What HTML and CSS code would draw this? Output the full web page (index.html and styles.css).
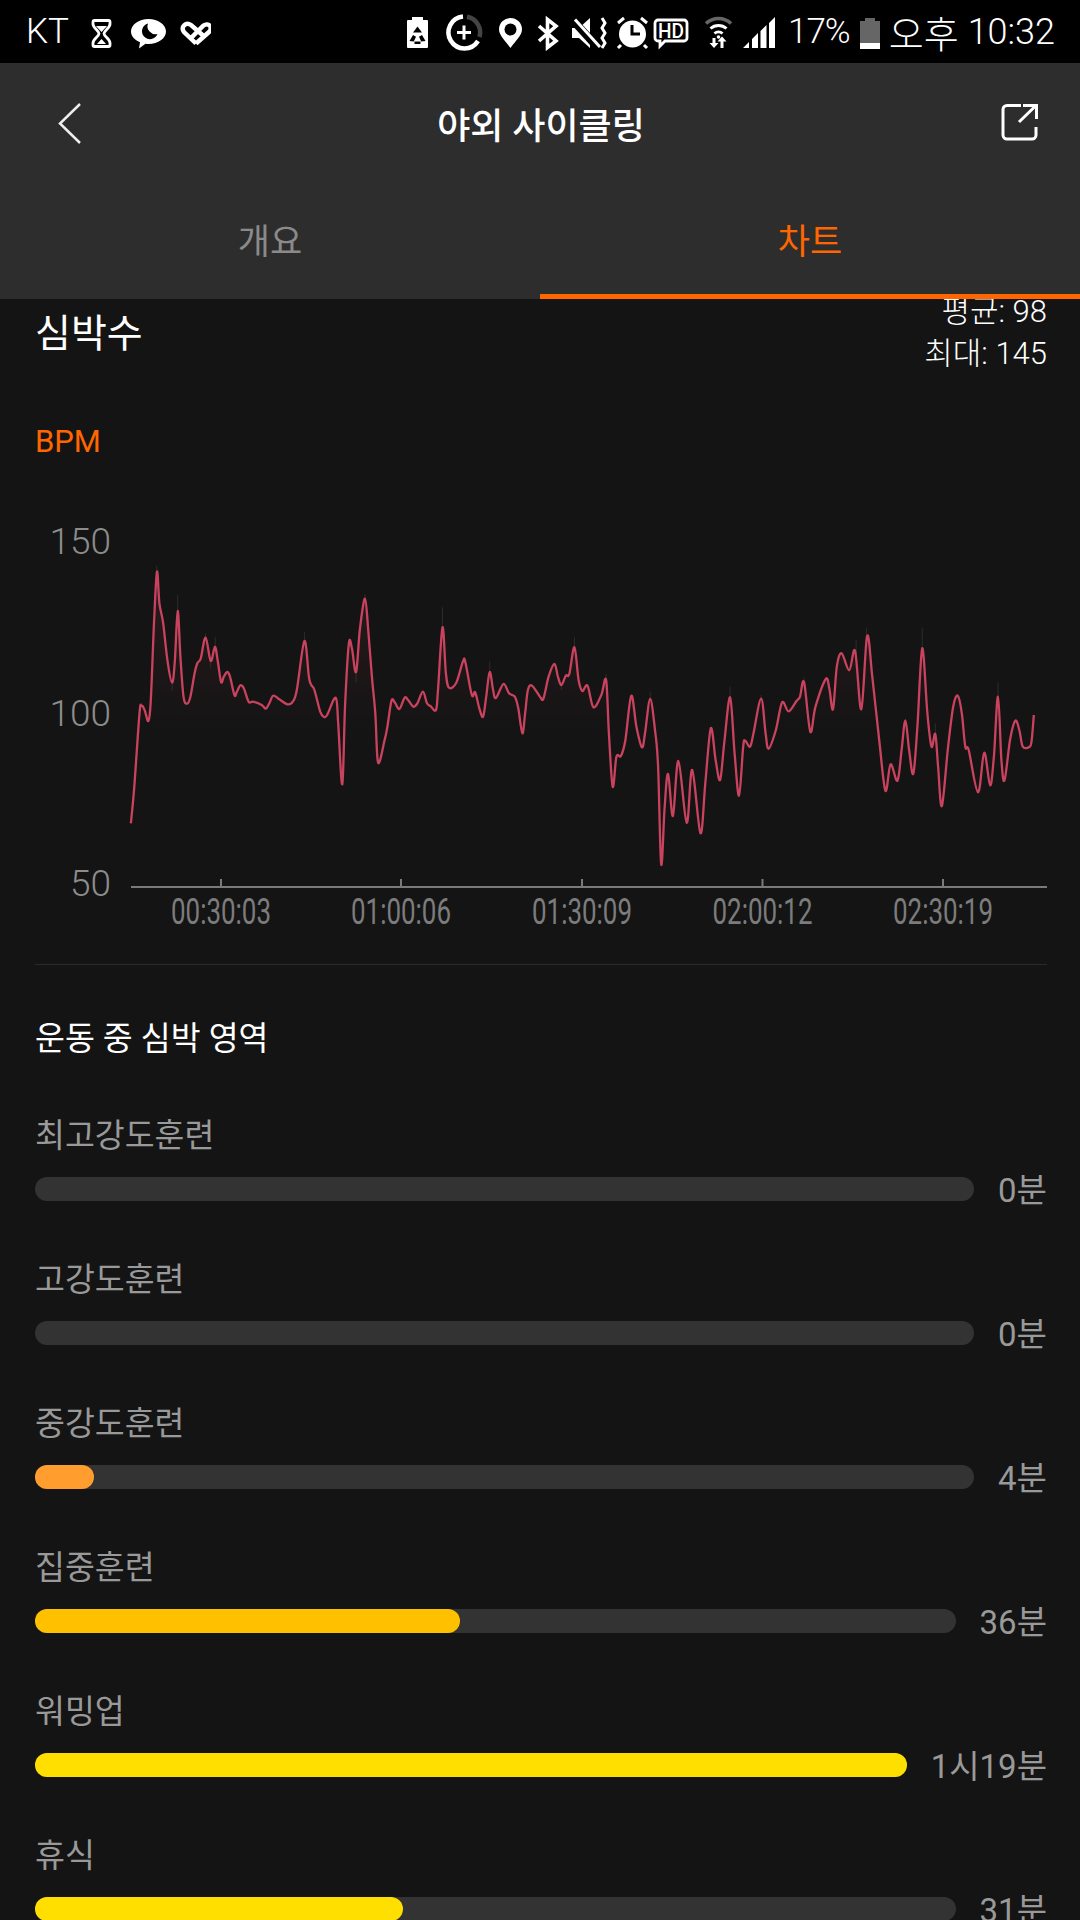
FILE: index.html
```html
<!DOCTYPE html>
<html lang="ko">
<head>
    <meta charset="UTF-8">
    <meta name="viewport" content="width=device-width, initial-scale=1.0">
    <title>야외 사이클링</title>
    <link rel="stylesheet" href="styles.css">
</head>
<body>
    <div class="status-bar">
        <span class="carrier">KT</span>
        <svg class="status-left" width="120" height="31" viewBox="91 18 120 31">
            <path class="line-2" d="M94.500 20.500h14a1.500 1.500 0 0 1 1.500 1.500v2c0 4-6 6.500-6 9.500s6 5.500 6 9.500v2a1.500 1.500 0 0 1-1.500 1.500h-14a1.500 1.500 0 0 1-1.500-1.500v-2c0-4 6-6.500 6-9.500s-6-5.500-6-9.500v-2a1.500 1.500 0 0 1 1.500-1.500z"/>
            <path class="solid" d="M96 26h11l-5.500 6zM101.500 39l-4.500 5h9z"/>
            <path class="solid" d="M148.500 19c9.700 0 17.500 5.600 17.500 12.500S158.200 44 148.500 44c-1 0-2 0-3-.2L139 48.500l1-6.300C134.500 40 131 36 131 31.500 131 24.600 138.800 19 148.500 19z"/>
            <path class="cut" d="M148 23.500a8 8 0 1 0 9.500 10.500a8 8 0 0 1-9.500-10.500z"/>
            <path class="line-4" d="M196 43.500L184 32c-4-5 2-10.500 7-7L202.500 35M191 38L203.500 25.500c5-3.500 10 2 5.500 6.500L196 43.500"/>
        </svg>
        <svg class="status-right" width="368" height="37" viewBox="407 14 368 37">
            <!-- battery saver -->
            <path class="solid" d="M412 17h11v3h4a1 1 0 0 1 1 1v26a1 1 0 0 1-1 1h-19a1 1 0 0 1-1-1V21a1 1 0 0 1 1-1h4z"/>
            <path class="cut" d="M417.500 26.500l4.500 6h-9zM409.500 41l3.500-6 3 1.800-2.200 4.700zM425.500 41l-3.500-6-3 1.800 2.200 4.700zM414.500 41.500h6v2.500h-6z"/>
            <!-- data ring -->
            <path class="line-4" d="M478 41A16 16 0 1 1 463 16.500"/>
            <path class="ring-off" d="M467 16.800A16 16 0 0 1 479.500 37"/>
            <path class="line-3" d="M457 32.500h14M464 25.500v14"/>
            <!-- location -->
            <path class="solid" d="M510.500 18a11.500 11.500 0 0 1 11.500 11.500c0 6-7 12-11.500 18.500c-4.500-6.500-11.500-12.500-11.500-18.500a11.500 11.500 0 0 1 11.500-11.500z"/>
            <circle class="cut" cx="510.500" cy="29.500" r="6"/>
            <!-- bluetooth -->
            <path class="line-bt" d="M539 26L556 41L547.500 47.500V19.500L556 26L539 41"/>
            <!-- vibrate -->
            <path class="solid" d="M572 28h7l11-10v30l-11-10h-7z"/>
            <path class="slash-cut" d="M570 17L600 50"/>
            <path class="line-3" d="M575 19.500L600 47"/>
            <path class="line-3" d="M602 18l3 5-3 5 3 5-3 5 3 5-3 5"/>
            <!-- alarm -->
            <circle class="solid" cx="632.500" cy="34" r="13.500"/>
            <path class="clock-hands" d="M632 25v9h8"/>
            <path class="line-3" d="M618 23l6-5M647 23l-6-5M621 45l-3 3M644 45l3 3"/>
            <!-- hd voice -->
            <path class="line-2" d="M658 20h26a3 3 0 0 1 3 3v15a3 3 0 0 1-3 3h-19l-5 5v-5h-2a3 3 0 0 1-3-3V23a3 3 0 0 1 3-3z"/>
            <text class="hd-text" x="671" y="37.500" text-anchor="middle" textLength="26" lengthAdjust="spacingAndGlyphs">HD</text>
            <!-- wifi -->
            <path class="wifi-off" d="M706 23.500A18 18 0 0 1 731 23.500"/>
            <path class="line-3" d="M710.500 28.500A12 12 0 0 1 726.500 28.500M714.500 33.500A6 6 0 0 1 722.500 33.500"/>
            <circle class="solid" cx="718.500" cy="37" r="1.800"/>
            <path class="solid" d="M712.500 38h3v5h3l-4.500 5-4.500-5h3zM722 36.500l4.500 5h-3v6.500h-3v-6.500h-3z"/>
            <!-- signal -->
            <path class="solid" d="M743 48l6-6v6zM752 48V39l6-6v15zM760.500 48V31l6-6v23zM769 48V23l6-6v31z"/>
        </svg>
        <span class="status-text percent">17%</span>
        <svg class="battery" width="20" height="31" viewBox="859 17 20 31">
            <path class="battery-empty" d="M864 17h10v3h5v22h-20V20h5z"/>
            <rect class="solid" x="859" y="42" width="20" height="6"/>
        </svg>
        <span class="status-text ampm">오후</span>
        <span class="status-text clock">10:32</span>
    </div>

    <header class="app-header">
        <div class="toolbar">
            <svg width="24" height="43" viewBox="58 102 24 43">
                <path class="line-back" d="M80 104L60 123.500L80 143"/>
            </svg>
            <h1 class="title">야외 사이클링</h1>
            <svg width="40" height="40" viewBox="1000 104 40 40">
                <path class="line-3" d="M1021 106.500H1007a4 4 0 0 0-4 4V136a4 4 0 0 0 4 4H1032a4 4 0 0 0 4-4V128M1019 123L1036 106.500M1023 106.500H1036.500V120"/>
            </svg>
        </div>
        <nav class="tabs">
            <div class="tab">개요</div>
            <div class="tab active">차트</div>
        </nav>
    </header>

    <main class="content">
        <div class="inset hr-head">
            <h2 class="hr-title">심박수</h2>
            <div class="hr-stats">
                <div>평균: 98</div>
                <div>최대: 145</div>
            </div>
        </div>
        <div class="inset bpm-unit">BPM</div>

        <svg class="chart" width="1080" height="470" viewBox="0 480 1080 470">
            <defs>
                <linearGradient id="areaTint" gradientUnits="userSpaceOnUse" x1="0" y1="560" x2="0" y2="730">
                    <stop offset="0" stop-color="#d0455f" stop-opacity="0.13"/>
                    <stop offset="1" stop-color="#d0455f" stop-opacity="0"/>
                </linearGradient>
            </defs>
            <text class="axis-y" x="111" y="554">150</text>
            <text class="axis-y" x="111" y="726">100</text>
            <text class="axis-y" x="111" y="896">50</text>
            <path id="hrSpikes" class="hr-spikes"/>
            <path id="hrArea" fill="url(#areaTint)"/>
            <path id="hrLine" class="hr-line"/>
            <path class="axis-line" d="M131 887H1047M221 879V887M401 879V887M582 879V887M762.500 879V887M943 879V887"/>
            <text class="axis-x" x="221" y="924" textLength="100" lengthAdjust="spacingAndGlyphs">00:30:03</text>
            <text class="axis-x" x="401" y="924" textLength="100" lengthAdjust="spacingAndGlyphs">01:00:06</text>
            <text class="axis-x" x="582" y="924" textLength="100" lengthAdjust="spacingAndGlyphs">01:30:09</text>
            <text class="axis-x" x="762.500" y="924" textLength="100" lengthAdjust="spacingAndGlyphs">02:00:12</text>
            <text class="axis-x" x="943" y="924" textLength="100" lengthAdjust="spacingAndGlyphs">02:30:19</text>
        </svg>

        <div class="inset divider"></div>
        <h3 class="inset zones-title">운동 중 심박 영역</h3>

        <div class="inset zone">
            <div class="zone-label">최고강도훈련</div>
            <div class="zone-row">
                <div class="track"></div>
                <span class="zone-value">0분</span>
            </div>
        </div>
        <div class="inset zone">
            <div class="zone-label">고강도훈련</div>
            <div class="zone-row">
                <div class="track"></div>
                <span class="zone-value">0분</span>
            </div>
        </div>
        <div class="inset zone">
            <div class="zone-label">중강도훈련</div>
            <div class="zone-row">
                <div class="track"><div class="fill fill-orange" style="width:6.3%"></div></div>
                <span class="zone-value">4분</span>
            </div>
        </div>
        <div class="inset zone">
            <div class="zone-label">집중훈련</div>
            <div class="zone-row">
                <div class="track"><div class="fill fill-amber" style="width:46.2%"></div></div>
                <span class="zone-value">36분</span>
            </div>
        </div>
        <div class="inset zone">
            <div class="zone-label">워밍업</div>
            <div class="zone-row">
                <div class="track"><div class="fill fill-yellow" style="width:100%"></div></div>
                <span class="zone-value">1시19분</span>
            </div>
        </div>
        <div class="inset zone">
            <div class="zone-label">휴식</div>
            <div class="zone-row">
                <div class="track"><div class="fill fill-yellow" style="width:40%"></div></div>
                <span class="zone-value">31분</span>
            </div>
        </div>
    </main>

    <script src="chart.js"></script>
</body>
</html>
```

FILE: styles.css
```css
* {
    box-sizing: border-box;
}
html, body {
    margin: 0;
    padding: 0;
    height: 1920px;
    overflow: hidden;
}
body {
    width: 1080px;
    display: flex;
    flex-direction: column;
    background: #141414;
    color: white;
    font-family: Roboto, 'Noto Sans CJK KR', sans-serif;
}
h1, h2, h3 {
    margin: 0;
    font-weight: 400;
}

/* status bar */
.status-bar {
    height: 63px;
    flex: none;
    display: flex;
    align-items: center;
    background: #000;
    padding-left: 26px;
}
.carrier {
    font-size: 35px;
    font-weight: 300;
    width: 65px;
}
.status-left {
    margin-top: 3px;
}
.status-right {
    margin-left: 196px;
    margin-top: 2px;
}
.status-text {
    font-size: 35px;
    font-weight: 300;
    letter-spacing: -1px;
    white-space: nowrap;
}
.percent {
    margin-left: 13px;
}
.battery {
    margin-left: 10px;
    margin-top: 3px;
}
.ampm {
    font-size: 38px;
    letter-spacing: 0;
    margin-left: 9px;
}
.clock {
    font-size: 36px;
    letter-spacing: 0;
    margin-left: 9px;
}

/* svg icon pieces */
.solid {
    fill: #fff;
}
.cut {
    fill: #000;
}
.line-2, .line-3, .line-4, .line-bt, .line-back, .ring-off, .wifi-off, .clock-hands, .slash-cut {
    fill: none;
    stroke: #fff;
}
.line-2 {
    stroke-width: 2.8;
}
.line-3 {
    stroke-width: 3;
}
.line-bt {
    stroke-width: 3.6;
}
.line-4 {
    stroke-width: 4.5;
}
.line-back {
    stroke: #eee;
    stroke-width: 2.5;
}
.ring-off {
    stroke: #444;
    stroke-width: 4.5;
}
.wifi-off {
    stroke: #666;
    stroke-width: 3.5;
}
.clock-hands {
    stroke: #000;
    stroke-width: 3;
}
.slash-cut {
    stroke: #000;
    stroke-width: 8;
}
.hd-text {
    fill: #fff;
    font-size: 20px;
    font-weight: 500;
}
.battery-empty {
    fill: #666;
}

/* header and tabs */
.app-header {
    height: 236px;
    flex: none;
    background: #2d2d2d;
}
.toolbar {
    height: 120px;
    display: flex;
    align-items: center;
    justify-content: space-between;
    padding: 0 40px 0 58px;
}
.title {
    font-size: 36px;
    font-weight: 500;
}
.tabs {
    height: 116px;
    display: flex;
}
.tab {
    flex: 1;
    display: flex;
    align-items: center;
    justify-content: center;
    font-size: 35px;
    color: #8a8a8a;
    border-bottom: 5px solid transparent;
}
.tab.active {
    color: #ff6600;
    border-bottom-color: #ff6600;
}

/* scrolled content, the first stats line runs under the header */
.content {
    flex: 1;
    overflow: hidden;
}
.inset {
    margin-left: 35px;
    margin-right: 33px;
}
.hr-head {
    display: flex;
    justify-content: space-between;
    align-items: center;
    margin-top: -8px;
}
.hr-title {
    font-size: 39px;
    padding-bottom: 7px;
}
.hr-stats {
    font-size: 31px;
    font-weight: 300;
    line-height: 42px;
    text-align: right;
    color: #fff;
}
.bpm-unit {
    font-size: 31px;
    line-height: 40px;
    margin-top: 47px;
    color: #ff6600;
}

/* chart */
.chart {
    display: block;
    margin-top: 18px;
}
.axis-y {
    font-size: 37px;
    font-weight: 300;
    fill: #8c8c8c;
    text-anchor: end;
}
.axis-x {
    font-size: 36px;
    font-weight: 400;
    fill: #7c7c7c;
    text-anchor: middle;
}
.axis-line {
    fill: none;
    stroke: #7a7a7a;
    stroke-width: 2;
}
.hr-line {
    fill: none;
    stroke: #c9435f;
    stroke-width: 2.3;
    stroke-linejoin: round;
}
.hr-spikes {
    fill: none;
    stroke: #2c2c2c;
    stroke-width: 1;
}

/* heart rate zones */
.divider {
    height: 1px;
    margin-top: 14px;
    background: #2a2a2a;
}
.zones-title {
    font-size: 32.5px;
    line-height: 44px;
    margin-top: 52px;
}
.zone {
    margin-top: 49px;
}
.zones-title + .zone {
    margin-top: 53px;
}
.zone-label {
    font-size: 32.5px;
    line-height: 44px;
    color: #999;
    margin-bottom: 11px;
}
.zone-row {
    height: 40px;
    display: flex;
    align-items: center;
    gap: 24px;
}
.zone-value {
    font-size: 33px;
    color: #999;
    white-space: nowrap;
    padding-bottom: 3px;
}
.track {
    flex: 1;
    height: 24px;
    border-radius: 12px;
    background: #333;
}
.fill {
    height: 100%;
    border-radius: 12px;
}
.fill-orange {
    background: #ff9d2e;
}
.fill-amber {
    background: #ffc000;
}
.fill-yellow {
    background: #ffdf00;
}
```

FILE: chart.js
```js
// heart rate trace, read off the chart at 2.904 units per px across and 3 per px down
const leftPart = [
    [380,970],[390,860],[405,640],[411,617],[420,630],[431,663],[438,600],[448,350],[456,215],[463,310],
    [474,370],[486,480],[500,548],[508,480],[516,333],[524,470],[533,590],[543,611],[553,590],[565,520],
    [573,490],[583,475],[597,413],[612,483],[624,440],[632,480],[642,546],[650,530],[660,516],[668,530],
    [681,586],[688,575],[698,556],[708,565],[722,605],[735,605],[760,615],[772,626],[782,610],[793,587],
    [810,597],[835,613],[850,605],[862,570],[884,423],[897,530],[904,555],[913,570],[930,635],[940,650],
    [950,645],[975,593],[982,670],[994,853],[1002,620],[1013,432],[1022,445],[1034,516],[1045,390],[1060,296],
    [1070,400],[1080,530],[1090,640],[1098,788],[1117,720],[1125,680],[1137,602],[1147,608],[1160,627],[1175,593],
    [1185,600],[1200,620],[1212,610],[1228,575],[1240,610],[1250,618],[1266,630],[1272,570],[1285,382],[1295,520],
    [1304,563],[1325,548],[1345,482],[1352,490],[1370,585],[1380,577],[1392,625],[1403,650],[1412,590],[1422,516],
    [1432,570],[1440,594],[1462,552],[1478,580],[1495,590],[1505,625],[1517,700],[1525,640],[1533,570],[1545,557]
];
const rightPart = [
    [0,590],[10,596],[25,530],[42,492],[52,530],[62,555],[75,527],[85,522],[100,442],[112,540],
    [123,573],[138,557],[155,622],[178,585],[192,540],[200,700],[211,860],[222,770],[235,768],[248,720],
    [265,587],[280,680],[296,742],[305,700],[320,597],[335,700],[343,800],[352,1093],[362,920],[372,822],
    [386,948],[402,783],[426,968],[442,810],[466,1000],[480,850],[496,685],[510,780],[523,840],[535,730],
    [552,592],[565,760],[578,887],[590,740],[596,722],[610,740],[620,700],[642,596],[655,700],[664,746],
    [685,690],[703,607],[722,634],[745,603],[755,590],[767,547],[785,695],[800,620],[830,537],[840,565],
    [851,628],[862,500],[876,460],[898,511],[915,453],[933,628],[950,408],[965,530],[985,720],[1003,872],
    [1018,793],[1038,842],[1050,750],[1061,661],[1072,750],[1084,821],[1096,680],[1110,445],[1125,640],[1137,740],
    [1148,702],[1156,800],[1167,918],[1185,740],[1200,620],[1213,587],[1225,640],[1235,740],[1245,750],[1272,877],
    [1290,758],[1307,856],[1318,770],[1330,590],[1340,780],[1349,841],[1365,720],[1380,662],[1392,690],[1402,740],
    [1422,740],[1428,720],[1434,645]
];
// faint ticks that stick out of the peaks: x, top, bottom
const leftSpikes = [[455,197,230],[516,285,340],[597,400,420],[625,410,445],[884,395,430],[1060,283,305],[1285,322,390],[1422,485,520],[500,540,572],[612,480,503],[1034,510,548]];
const rightSpikes = [[100,412,450],[192,522,545],[320,575,600],[552,560,600],[642,585,600],[767,530,550],[918,420,460],[948,383,415],[1110,383,450],[1330,548,595],[1148,670,705],[62,550,570]];

const mapX = z => z / 2.904;
const mapY = z => 500 + z / 3;

const points = leftPart.map(p => [mapX(p[0]), mapY(p[1])])
    .concat(rightPart.map(p => [540 + mapX(p[0]), mapY(p[1])]));

// catmull-rom through the points
function smoothPath(pts) {
    let d = `M${pts[0][0].toFixed(1)} ${pts[0][1].toFixed(1)}`;
    for (let i = 0; i < pts.length - 1; i++) {
        const p0 = pts[i - 1] || pts[i];
        const p1 = pts[i];
        const p2 = pts[i + 1];
        const p3 = pts[i + 2] || p2;
        const c1x = p1[0] + (p2[0] - p0[0]) / 6;
        const c1y = p1[1] + (p2[1] - p0[1]) / 6;
        const c2x = p2[0] - (p3[0] - p1[0]) / 6;
        const c2y = p2[1] - (p3[1] - p1[1]) / 6;
        d += `C${c1x.toFixed(1)} ${c1y.toFixed(1)} ${c2x.toFixed(1)} ${c2y.toFixed(1)} ${p2[0].toFixed(1)} ${p2[1].toFixed(1)}`;
    }
    return d;
}

const line = smoothPath(points);
document.getElementById('hrLine').setAttribute('d', line);

const last = points[points.length - 1];
document.getElementById('hrArea').setAttribute('d', `${line}L${last[0].toFixed(1)} 887L${points[0][0].toFixed(1)} 887Z`);

const spikes = leftSpikes.map(s => `M${mapX(s[0]).toFixed(1)} ${mapY(s[1]).toFixed(1)}V${mapY(s[2]).toFixed(1)}`)
    .concat(rightSpikes.map(s => `M${(540 + mapX(s[0])).toFixed(1)} ${mapY(s[1]).toFixed(1)}V${mapY(s[2]).toFixed(1)}`));
document.getElementById('hrSpikes').setAttribute('d', spikes.join(''));
```
